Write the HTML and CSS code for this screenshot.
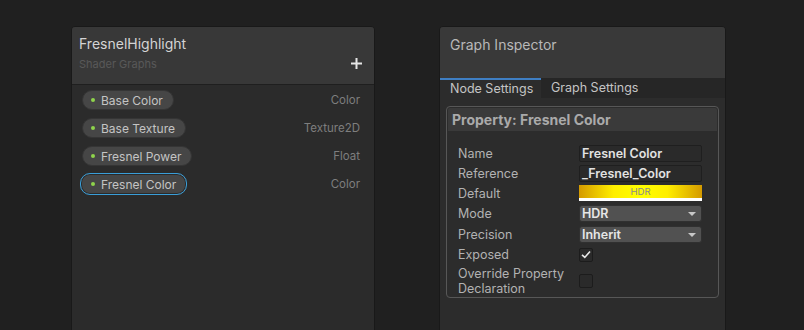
FILE: index.html
```html
<!DOCTYPE html>
<html>
<head>
<meta charset="utf-8">
<link rel="stylesheet" href="styles.css">
</head>
<body>
<div class="stage">
  <div class="panel bb">
    <div class="bb-head">
      <div class="bb-title">FresnelHighlight</div>
      <div class="bb-sub-row">
        <span class="bb-sub">Shader Graphs</span>
        <span class="plus">
          <svg width="11" height="11" viewBox="0 0 11 11"><rect x="4.5" y="0" width="2" height="11" fill="#e6e6e6"/><rect x="0" y="4.5" width="11" height="2" fill="#e6e6e6"/></svg>
        </span>
      </div>
    </div>
    <div class="bb-list">
      <div class="prop-row"><span class="pill"><i class="dot"></i>Base Color</span><span class="ptype">Color</span></div>
      <div class="prop-row"><span class="pill"><i class="dot"></i>Base Texture</span><span class="ptype">Texture2D</span></div>
      <div class="prop-row"><span class="pill"><i class="dot"></i>Fresnel Power</span><span class="ptype">Float</span></div>
      <div class="prop-row"><span class="pill selected"><i class="dot"></i>Fresnel Color</span><span class="ptype">Color</span></div>
    </div>
  </div>

  <div class="panel gi">
    <div class="gi-head">Graph Inspector</div>
    <div class="tabs">
      <div class="tab active">Node Settings</div>
      <div class="tab">Graph Settings</div>
    </div>
    <div class="gi-body">
      <div class="propbox">
        <div class="propbox-title">Property: Fresnel Color</div>
        <div class="fields">
          <div class="field"><span class="label">Name</span><span class="text-input">Fresnel Color</span></div>
          <div class="field"><span class="label">Reference</span><span class="text-input">_Fresnel_Color</span></div>
          <div class="field"><span class="label">Default</span><span class="swatch"><span class="swatch-color">HDR</span><span class="swatch-alpha"></span></span></div>
          <div class="field f-drop"><span class="label">Mode</span><span class="dropdown">HDR<i class="arrow"></i></span></div>
          <div class="field f-drop"><span class="label">Precision</span><span class="dropdown">Inherit<i class="arrow"></i></span></div>
          <div class="field f-check"><span class="label">Exposed</span><span class="checkbox">
            <svg width="10" height="9" viewBox="0 0 10 9"><path d="M1 4.8 L3.8 7.4 L9 1.4" fill="none" stroke="#e8e8e8" stroke-width="1.6"/></svg>
          </span></div>
          <div class="field f-check2"><span class="label">Override Property<br>Declaration</span><span class="checkbox"></span></div>
        </div>
      </div>
    </div>
  </div>
</div>
</body>
</html>
```

FILE: styles.css
```css
* { box-sizing: border-box; }
html, body { margin: 0; padding: 0; }
body {
  background: #202020;
  font-family: Inter, "Noto Sans", sans-serif;
  width: 804px;
  height: 330px;
  overflow: hidden;
}
.stage {
  display: flex;
  align-items: flex-start;
  padding: 26px 0 0 71px;
  gap: 64px;
  height: 330px;
}
.panel {
  border: 1px solid #191919;
  border-radius: 4px 4px 0 0;
  height: 320px;
  overflow: hidden;
}
.bb {
  width: 304px;
  background: #2b2b2b;
}
.bb-head {
  background: #383838;
  height: 58px;
  border-bottom: 1px solid #1f1f1f;
  padding: 7px 12px 0 7px;
}
.bb-title {
  color: #d4d4d4;
  font-size: 14px;
  line-height: 20px;
}
.bb-sub-row {
  display: flex;
  justify-content: space-between;
  align-items: center;
  margin-top: 2px;
}
.bb-sub {
  color: #595959;
  font-size: 11px;
  line-height: 16px;
}
.plus { display: flex; margin-top: -2px; }
.bb-list {
  padding: 5px 14px 0 10px;
  display: flex;
  flex-direction: column;
  gap: 8px;
}
.prop-row {
  display: flex;
  justify-content: space-between;
  align-items: center;
  height: 20px;
}
.pill {
  display: inline-flex;
  align-items: center;
  height: 20px;
  padding: 0 10px 0 8px;
  background: #464646;
  border: 1px solid #353535;
  border-radius: 10px;
  color: #c4c4c4;
  font-size: 12px;
}
.pill.selected {
  height: 22px;
  margin-left: -2px;
  padding: 0 10px 0 10px;
  border: 1px solid #3a9ed8;
  box-shadow: inset 0 0 0 1px #2a2a2a;
}
.dot {
  width: 4px;
  height: 4px;
  border-radius: 50%;
  background: #8fd44c;
  margin-right: 6px;
}
.ptype {
  color: #7e7e7e;
  font-size: 11.5px;
}
.gi {
  width: 287px;
  background: #2c2c2c;
}
.gi-head {
  background: #393939;
  height: 51px;
  color: #b8b8b8;
  font-size: 14px;
  padding: 9px 10px 0 10px;
  line-height: 18px;
}
.tabs {
  display: flex;
  background: #262626;
  height: 20px;
}
.tab {
  color: #c4c4c4;
  font-size: 12.5px;
  line-height: 20px;
  padding: 0 10px;
  white-space: nowrap;
}
.tab.active {
  background: #2c2c2c;
  border-top: 2px solid #3f7fc4;
  line-height: 18px;
  width: 101px;
}
.gi-body {
  padding: 8px 6px 0 6px;
}
.propbox {
  border: 1px solid #575757;
  border-radius: 4px;
  height: 192px;
  padding: 1px 1px 0 1px;
}
.propbox-title {
  background: #3a3a3a;
  color: #aaaaaa;
  font-weight: 700;
  font-size: 14px;
  line-height: 23px;
  padding: 0 4px;
  border-radius: 2px 2px 0 0;
}
.fields {
  padding: 12px 0 0 10px;
  display: flex;
  flex-direction: column;
}
.field {
  display: flex;
  align-items: center;
  height: 20px;
}
.field.f-drop { height: 21px; }
.field.f-check { height: 19px; }
.field.f-check2 { height: 34px; }
.label {
  width: 121px;
  color: #b2b2b2;
  font-size: 12.5px;
  line-height: 15px;
  flex: none;
}
.text-input {
  width: 123px;
  height: 17px;
  background: #2a2a2a;
  border: 1px solid #1f1f1f;
  border-radius: 2px;
  color: #e2e2e2;
  font-weight: 600;
  font-size: 12.5px;
  line-height: 15px;
  padding: 0 2px;
}
.swatch {
  width: 123px;
  height: 17px;
  display: flex;
  flex-direction: column;
}
.swatch-color {
  height: 13px;
  background: linear-gradient(90deg, #d49a00 0%, #ffee00 28%, #ffff00 50%, #ffee00 72%, #d49a00 100%);
  color: #8a8a8a;
  font-size: 9.5px;
  line-height: 13px;
  text-align: center;
}
.swatch-alpha {
  height: 3px;
  background: #ffffff;
}
.dropdown {
  position: relative;
  width: 123px;
  height: 17px;
  background: #515151;
  border: 1px solid #303030;
  border-radius: 3px;
  color: #e6e6e6;
  font-weight: 600;
  font-size: 12.5px;
  line-height: 15px;
  padding: 0 2px;
}
.arrow {
  position: absolute;
  right: 5px;
  top: 6px;
  width: 0;
  height: 0;
  border-left: 4px solid transparent;
  border-right: 4px solid transparent;
  border-top: 4px solid #c8c8c8;
}
.checkbox {
  width: 14px;
  height: 14px;
  background: #2a2a2a;
  border: 1px solid #1c1c1c;
  border-radius: 2px;
  display: flex;
  align-items: center;
  justify-content: center;
}
```
